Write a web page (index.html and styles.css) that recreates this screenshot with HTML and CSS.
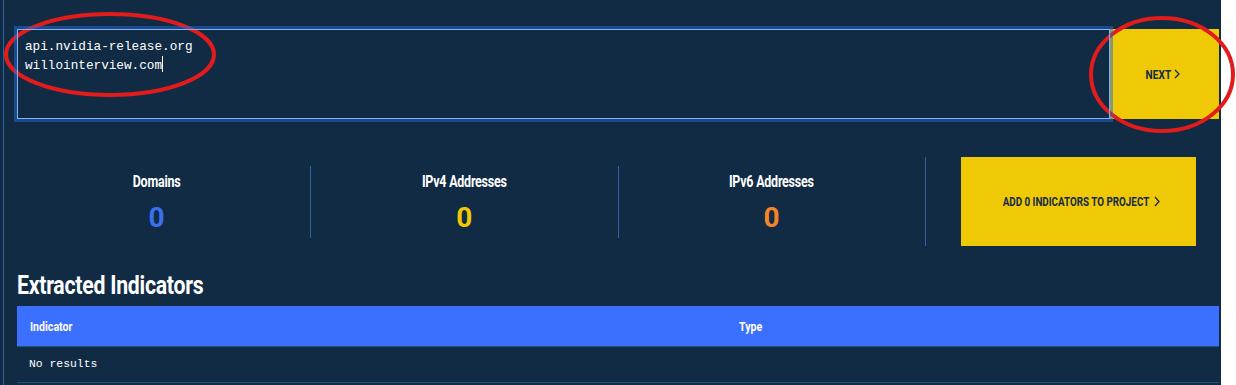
FILE: index.html
```html
<!DOCTYPE html>
<html>
<head>
<meta charset="utf-8">
<link rel="stylesheet" href="styles.css">
</head>
<body>
<div class="page">
  <div class="content">
    <div class="input-row">
      <div class="textbox">api.nvidia-release.org<br>willointerview.com<span class="caret"></span></div>
      <button class="next-btn"><span class="btn-label next-label">NEXT</span><svg class="chev" width="6" height="10" viewBox="0 0 6 10"><path d="M1 1 L5 5 L1 9" fill="none" stroke="#132a44" stroke-width="1.3"/></svg></button>
    </div>

    <div class="stats">
      <div class="stat">
        <div class="stat-label">Domains</div>
        <div class="stat-num num-blue">0</div>
      </div>
      <div class="stat stat-div">
        <div class="stat-label">IPv4 Addresses</div>
        <div class="stat-num num-yellow">0</div>
      </div>
      <div class="stat stat-div">
        <div class="stat-label">IPv6 Addresses</div>
        <div class="stat-num num-orange">0</div>
      </div>
      <div class="add-cell">
        <button class="add-btn"><span class="btn-label add-label">ADD 0 INDICATORS TO PROJECT</span><svg class="chev" width="6" height="11" viewBox="0 0 6 11"><path d="M1 1 L5 5.5 L1 10" fill="none" stroke="#132a44" stroke-width="1.3"/></svg></button>
      </div>
    </div>

    <h2 class="heading"><span class="heading-text">Extracted Indicators</span></h2>

    <div class="table">
      <div class="thead">
        <div class="th th-ind"><span class="th-text">Indicator</span></div>
        <div class="th"><span class="th-text">Type</span></div>
      </div>
      <div class="trow">No results</div>
    </div>
  </div>
</div>
<svg class="marks" width="1236" height="385" viewBox="0 0 1236 385">
  <ellipse cx="110" cy="54.5" rx="104" ry="40.5" fill="none" stroke="#e21b1b" stroke-width="4"/>
  <ellipse cx="1162" cy="74.5" rx="71" ry="56.5" fill="none" stroke="#e21b1b" stroke-width="4"/>
</svg>
</body>
</html>
```

FILE: styles.css
```css
html, body {
  margin: 0;
  padding: 0;
  background: #ffffff;
}

body {
  position: relative;
  width: 1236px;
  height: 385px;
  overflow: hidden;
  font-family: Roboto, "Liberation Sans", sans-serif;
}

.page {
  width: 1218px;
  height: 385px;
  padding-left: 3px;
  background: #112b45;
  overflow: hidden;
}

.content {
  height: 385px;
  border-left: 1px solid #2d64a0;
  padding: 29px 2px 0 13px;
  box-sizing: border-box;
}

.input-row {
  display: flex;
  height: 90px;
}

.textbox {
  position: relative;
  z-index: 2;
  width: 1093px;
  height: 90px;
  box-sizing: border-box;
  border: 1px solid #86b2ee;
  box-shadow: 0 0 0 3px rgba(38, 105, 215, 0.5);
  padding: 7px 7px;
  color: #ffffff;
  font-family: "Liberation Mono", "DejaVu Sans Mono", monospace;
  font-size: 12.7px;
  line-height: 19px;
}

.caret {
  display: inline-block;
  width: 1px;
  height: 16px;
  background: #ffffff;
  vertical-align: -3px;
}

.next-btn {
  width: 109px;
  height: 90px;
  border: none;
  background: #f0c906;
  display: flex;
  align-items: center;
  justify-content: center;
  gap: 4px;
  padding: 0 3px 0 0;
  color: #132a44;
}

.btn-label {
  display: inline-block;
  font-family: Roboto, sans-serif;
  font-weight: 700;
  color: #132a44;
  transform: scaleX(0.78);
  white-space: nowrap;
}

.next-label {
  font-size: 13px;
  margin: 0 -4px;
}

.add-label {
  font-size: 12.6px;
  margin: 0 -20px;
}

.chev {
  display: block;
}

.stats {
  margin: 38px 0 0 -14px;
  width: 1229px;
  height: 89px;
  display: grid;
  grid-template-columns: repeat(4, 1fr);
}

.stat {
  align-self: center;
  height: 72px;
  display: flex;
  flex-direction: column;
  align-items: center;
  padding-top: 7px;
  box-sizing: border-box;
}

.stat-div {
  border-left: 1px solid #2d64a0;
}

.stat-label {
  font-family: Roboto, sans-serif;
  font-weight: 700;
  font-size: 16px;
  line-height: 18px;
  color: #ffffff;
  letter-spacing: -0.3px;
  transform: scaleX(0.78);
  white-space: nowrap;
}

.stat-num {
  margin-top: 11px;
  font-family: Roboto, sans-serif;
  font-weight: 700;
  font-size: 28px;
  line-height: 32px;
}

.num-blue { color: #3a6ff0; }
.num-yellow { color: #f0c906; }
.num-orange { color: #f5832a; }

.add-cell {
  border-left: 1px solid #2d64a0;
  display: flex;
  justify-content: center;
  align-items: stretch;
}

.add-btn {
  width: 235px;
  border: none;
  background: #f0c906;
  display: flex;
  align-items: center;
  justify-content: center;
  gap: 4px;
  padding: 0 0 0 4px;
}

.heading {
  margin: 25px 0 0 0;
  font-family: Roboto, sans-serif;
  font-weight: 700;
  font-size: 25px;
  line-height: 30px;
  color: #ffffff;
}

.heading-text {
  display: inline-block;
  transform: scaleX(0.85);
  transform-origin: left center;
  letter-spacing: -0.3px;
  white-space: nowrap;
}

.table {
  margin-top: 5px;
}

.thead {
  display: flex;
  height: 40px;
  align-items: center;
  background: #3b70fe;
  border-bottom: 1px solid #1e5577;
}

.th {
  padding-left: 13px;
  font-family: Roboto, sans-serif;
  font-weight: 700;
  font-size: 12.5px;
  color: #ffffff;
}

.th-text {
  display: inline-block;
  transform: scaleX(0.85);
  transform-origin: left center;
}

.th-ind {
  width: 709px;
  box-sizing: border-box;
}

.trow {
  height: 36px;
  box-sizing: border-box;
  border-bottom: 1px solid #1e5577;
  padding-left: 12px;
  padding-bottom: 2px;
  display: flex;
  align-items: center;
  font-family: "Liberation Mono", "DejaVu Sans Mono", monospace;
  font-size: 11.4px;
  color: #ffffff;
}

.marks {
  position: absolute;
  left: 0;
  top: 0;
  pointer-events: none;
}
```
